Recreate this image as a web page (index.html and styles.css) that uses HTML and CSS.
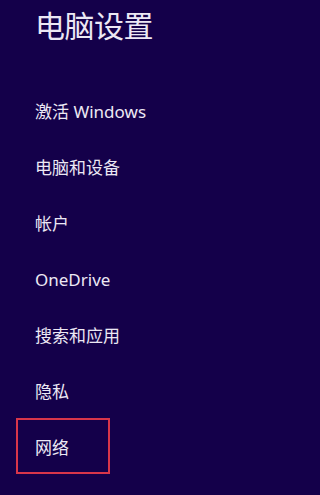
FILE: index.html
```html
<!DOCTYPE html>
<html lang="zh-CN">
<head>
<meta charset="utf-8">
<title>电脑设置</title>
<link rel="stylesheet" href="styles.css">
</head>
<body>
<div class="panel">
  <h1 class="title">电脑设置</h1>
  <ul class="menu">
    <li class="item">激活 Windows</li>
    <li class="item">电脑和设备</li>
    <li class="item">帐户</li>
    <li class="item">OneDrive</li>
    <li class="item">搜索和应用</li>
    <li class="item">隐私</li>
    <li class="item selected">网络</li>
  </ul>
</div>
</body>
</html>
```
FILE: styles.css
```css
html, body {
  margin: 0;
  padding: 0;
  background: #14004a;
}
body {
  width: 251px;
  height: 495px;
  overflow: hidden;
  font-family: "Noto Sans", "Noto Sans CJK SC", sans-serif;
  color: #ece8f4;
}
.panel {
  display: flex;
  flex-direction: column;
  padding-top: 11px;
}
.title {
  margin: 0 0 0 35px;
  font-size: 30px;
  line-height: 30px;
  font-weight: 400;
  letter-spacing: -0.5px;
}
.menu {
  list-style: none;
  margin: 43px 0 0 16px;
  padding: 0;
  display: flex;
  flex-direction: column;
  align-items: flex-start;
}
.item {
  position: relative;
  box-sizing: border-box;
  height: 56px;
  line-height: 56px;
  padding: 0 19px;
  font-size: 17px;
  white-space: nowrap;
}
.item.selected {
  width: 94px;
}
.item.selected::after {
  content: "";
  position: absolute;
  left: 0;
  top: -2px;
  width: 94px;
  height: 56px;
  box-sizing: border-box;
  border: 2px solid #d8364a;
}
```
